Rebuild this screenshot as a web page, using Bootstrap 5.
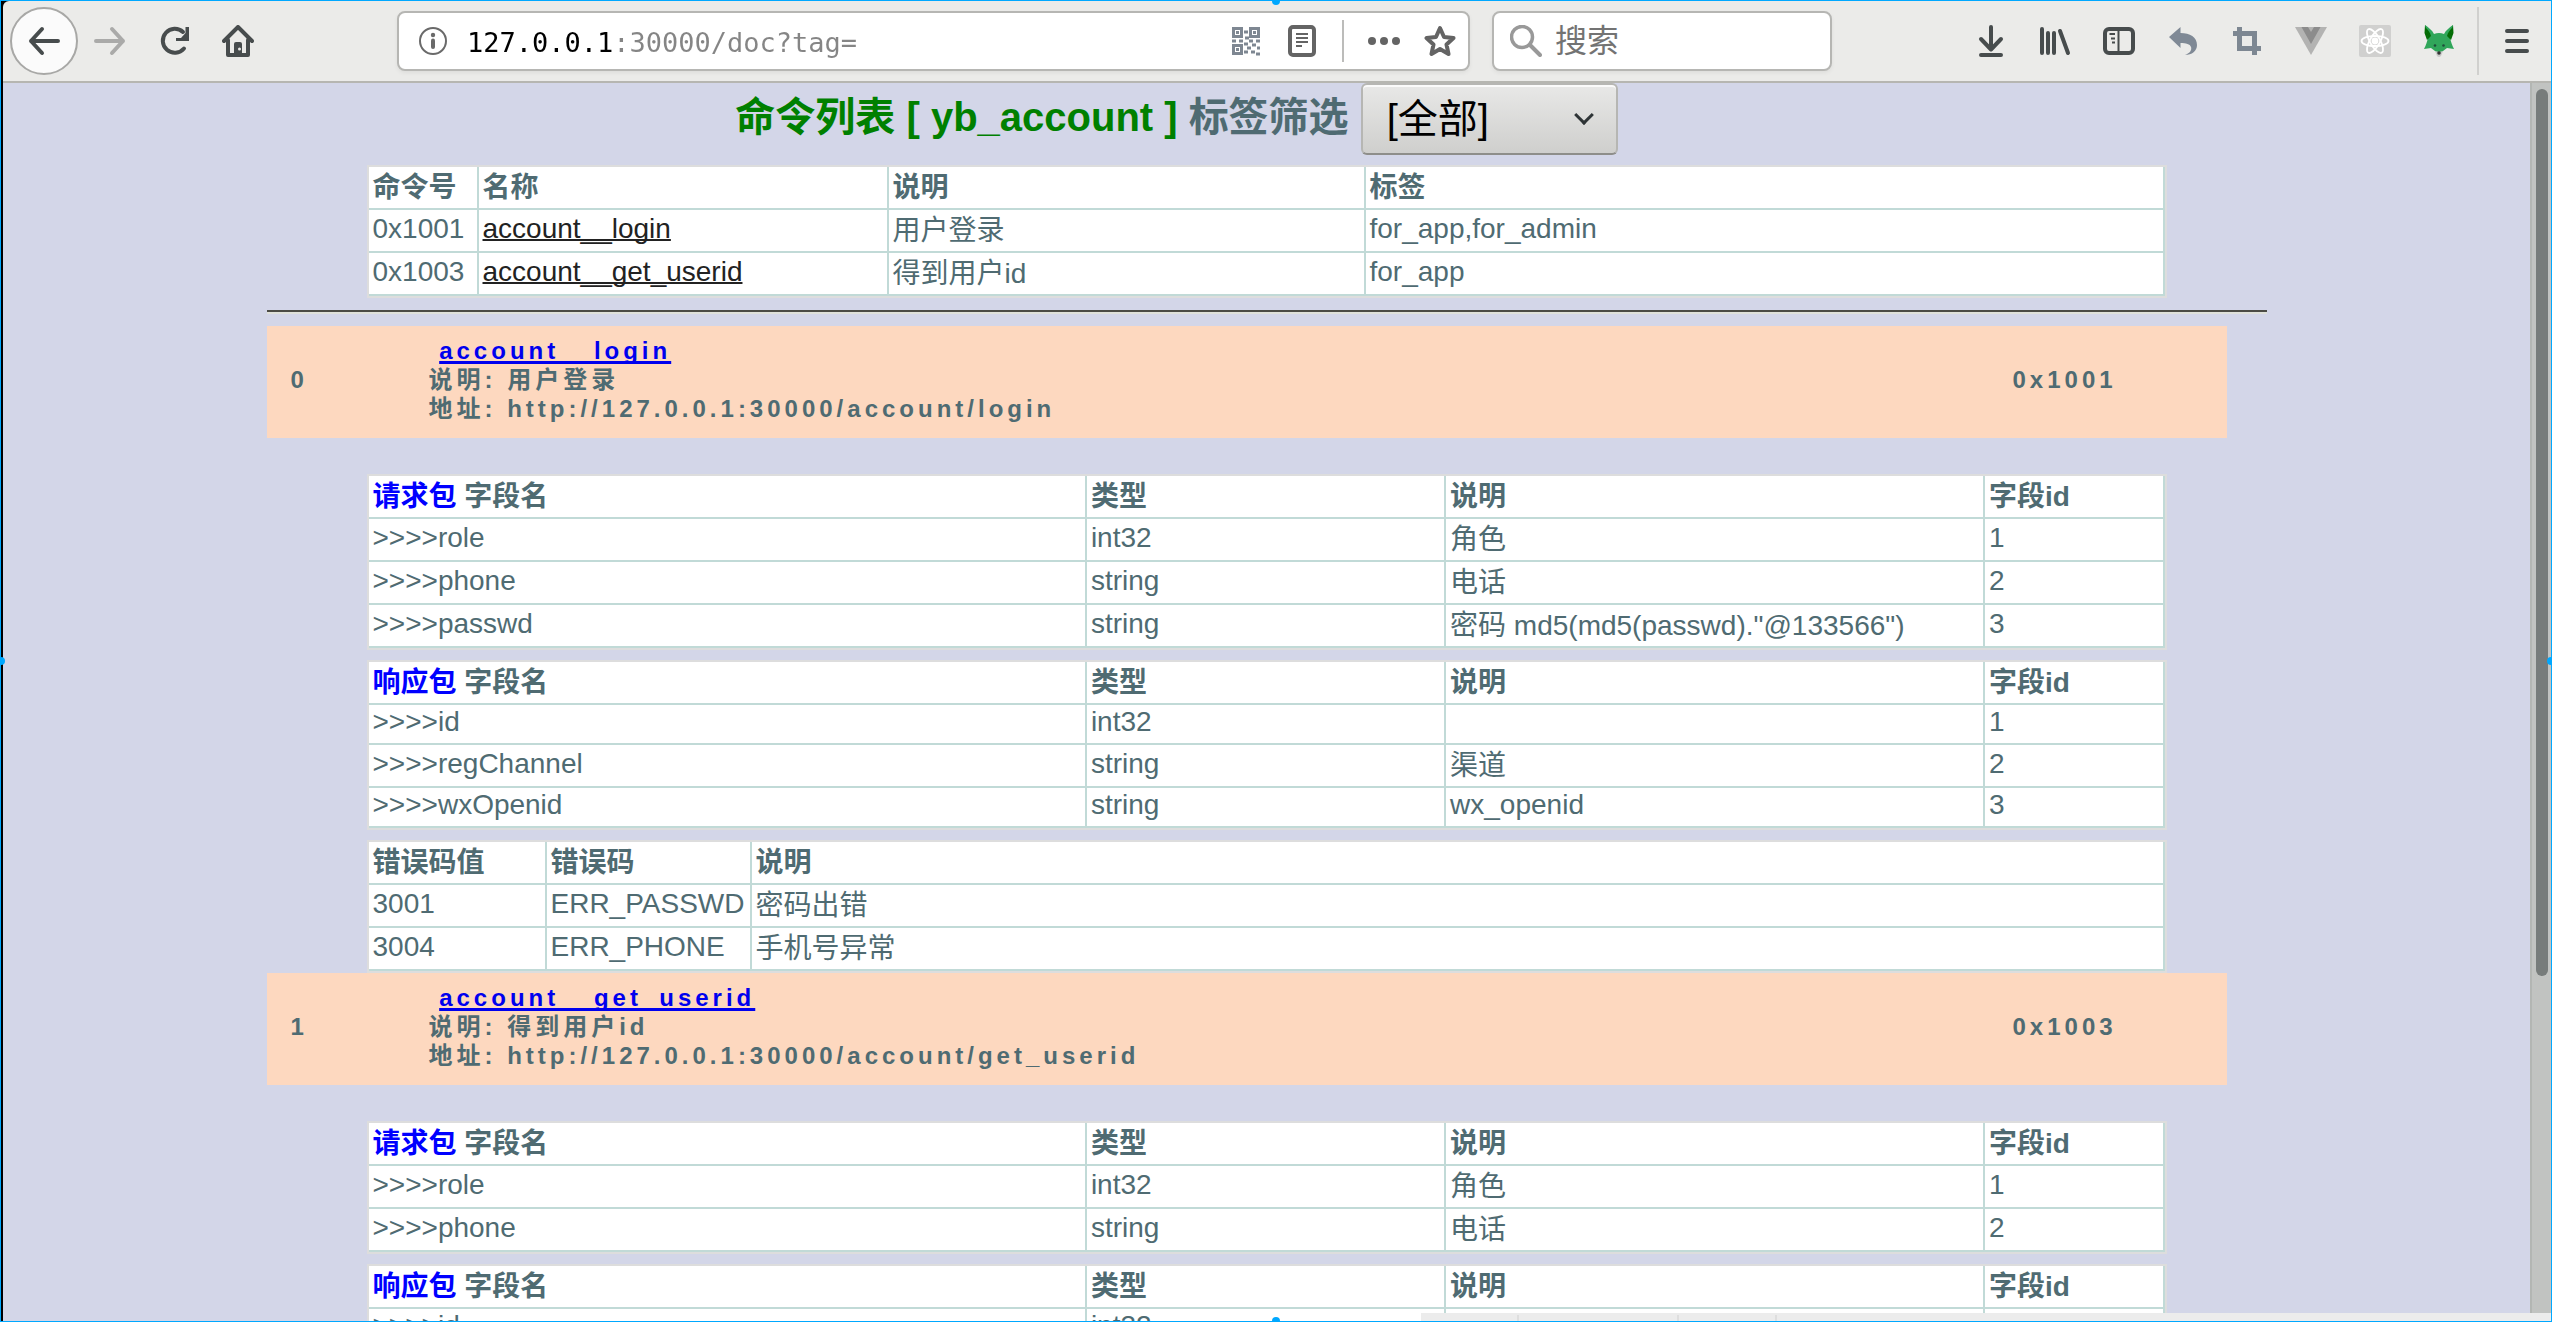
<!DOCTYPE html>
<html lang="zh-CN">
<head>
<meta charset="utf-8">
<meta name="viewport" content="width=device-width, initial-scale=1">
<title>命令列表</title>
<link href="https://cdn.jsdelivr.net/npm/bootstrap@5.3.0/dist/css/bootstrap.min.css" rel="stylesheet">
<style>
  body { font-family: "Liberation Sans", "Noto Sans CJK SC", sans-serif; font-size: 28px; line-height: 32px; color: #4f6b72; }
  .frame { height: 100vh; border: 1px solid #00a8ff; background: #000; padding-left: 2px; }
  .grip { position: absolute; width: 8px; height: 8px; border-radius: 50%; background: #00a8ff; z-index: 5; }
  .grip-t { top: -4px; left: calc(50% - 4px); } .grip-b { bottom: -4px; left: calc(50% - 4px); }
  .grip-l { left: -4px; top: calc(50% - 4px); } .grip-r { right: -4px; top: calc(50% - 4px); }

  .toolbar { height: 82px; padding: 0 2px 0 7px; background: #ebebe9; border-bottom: 2px solid #b6b6b1; border-top-left-radius: 6px; }
  .tool { width: 64px; height: 68px; padding: 0; border: 0; background: none; display: flex; align-items: center; justify-content: center; flex: none; }
  .tool-back { width: 68px; border: 2px solid #a8a8a6; border-radius: 50%; background: #fbfbfb; }
  .tool svg, .slim svg { width: 32px; height: 32px; display: block; }
  .slim { width: 56px; height: 56px; padding: 0; border: 0; background: none; display: flex; align-items: center; justify-content: center; flex: none; }
  .spacer { width: 5%; flex: none; }
  .field { height: 60px; border: 2px solid #b6b6b3; border-radius: 8px; background: #fff; box-shadow: 0 2px 4px rgba(0,0,0,.06); }
  .field input { border: 0; outline: 0; padding: 0; min-width: 0; }
  .field .url-text { padding-top: 3px; font: 27px/40px "DejaVu Sans Mono", monospace; background: linear-gradient(to right, #000 9ch, #858585 9ch); -webkit-background-clip: text; background-clip: text; color: transparent; }
  .info-mark { width: 28px; height: 28px; margin: 0 20px; flex: none; }
  .rule-v { width: 2px; height: 42px; background: #bcbcba; margin: 0 12px; flex: none; }
  .search-field { width: 340px; margin-left: 22px; padding-left: 16px; }
  .search-field svg { width: 32px; height: 32px; flex: none; }
  .search-field input { font-size: 32px; line-height: 40px; margin-left: 13px; background: none; color: #737373; }
  .search-field input::placeholder { color: #737373; opacity: 1; }
  .rule-menu { width: 2px; height: 68px; background: #d0d0ce; margin: 0 6px; }

  .doc-view { background: #d3d6e8; overflow: hidden; min-width: 0; }
  .doc-main { max-width: 2000px; }
  .title-bar { height: 82px; padding-right: 180px; font-size: 40px; line-height: 48px; font-weight: 700; }
  .title-bar h1, .title-bar label { font-size: 40px; line-height: 48px; font-weight: 700; margin: 10px 0 0; }
  .title-bar h1 { color: green; }
  .title-bar label { margin-left: 11px; }
  .tag-select { width: 257px; height: 72px; margin-left: 12px; padding: 0 24px; font: 40px/48px "Liberation Sans", "Noto Sans CJK SC", sans-serif; color: #000;
    appearance: none; border: 2px solid #b6b6b3; border-bottom-color: #8e8e8a; border-radius: 6px; box-shadow: inset 0 2px 0 #fafafa; background: linear-gradient(#e8e8e7, #cfcfcd); }
  .select-wrap::after { content: ""; position: absolute; right: 27px; top: 25px; width: 14px; height: 14px; border: solid #2e3436; border-width: 0 3px 3px 0; transform: rotate(45deg); pointer-events: none; }

  .grid-table { width: 90%; margin: 0 auto 10px; border: 2px solid #ddd; border-collapse: separate; border-spacing: 0; background: #fff; table-layout: fixed; }
  .grid-table th, .grid-table td { padding: 0 4px 4px; height: 43px; border-right: 2px solid #c1dad7; border-bottom: 2px solid #c1dad7; text-align: left; vertical-align: middle; white-space: nowrap; }
  .grid-table th, .grid-table .zh { padding: 2px 4px; }
  .grid-table .low td { height: 40px; }
  .grid-table a { color: #222; text-decoration-thickness: 2px; text-decoration-skip-ink: none; }
  .grid-table em { font-style: normal; color: #00f; }
  .w-code { width: 110px; } .w-name { width: 410px; } .w-note { width: 477px; }
  .w-errno { width: 178px; } .w-err { width: 205px; }
  .split { height: 4px; margin: 12px 0; background: #dfe1da; border-top: 2px solid #4b4b45; }

  .cmd { width: 98%; height: 112px; padding: 0 0 6px 24px; background: #fdd8bf; font-size: 24px; line-height: 29px; font-weight: 700; letter-spacing: 4px; margin-bottom: 36px; }
  .cmd a { color: #00e; text-decoration-thickness: 3px; text-decoration-skip-ink: none; }
  .cmd-no { width: 138px; } .cmd-code { width: 214px; }
  .after-err { margin-top: -10px; }

  .scroll-track { width: 21px; padding: 6px 3px 0 4px; background: #c1c3c1; border-left: 2px solid #b3b6b3; flex: none; }
  .scroll-thumb { width: 12px; height: 72%; border-radius: 6px; background: #777c7b; }
  .task-strip { position: absolute; right: 0; bottom: 0; width: 1130px; height: 8px; background: #ececec; }
  .task-strip i { border-right: 2px solid #dedede; height: 6px; align-self: flex-end; }
</style>
</head>
<body>
<div class="frame d-flex flex-column position-relative overflow-hidden">
  <span class="grip grip-t"></span><span class="grip grip-b"></span><span class="grip grip-l"></span><span class="grip grip-r"></span>

  <header class="toolbar d-flex align-items-center flex-shrink-0">
    <button class="tool tool-back" aria-label="后退"><svg viewBox="0 0 32 32" fill="none" stroke="#474c4d" stroke-width="4" stroke-linecap="round" stroke-linejoin="round"><path d="M30 16H3M14 4 3 16l11 12"/></svg></button>
    <button class="tool" aria-label="前进"><svg viewBox="0 0 32 32" fill="none" stroke="#aaaaa9" stroke-width="4" stroke-linecap="round" stroke-linejoin="round"><path d="M2 16h27M18 4l11 12-11 12"/></svg></button>
    <button class="tool" aria-label="刷新"><svg viewBox="0 0 32 32" fill="none" stroke="#474c4d" stroke-width="4"><path d="M26 23.500A12 12 0 1 1 25 7" stroke-linecap="round"/><path d="M31 2v14H18v-3h5L27.500 8V2z" fill="#474c4d" stroke="none"/></svg></button>
    <button class="tool" aria-label="主页"><svg viewBox="0 0 32 32" fill="none" stroke="#474c4d" stroke-width="4" stroke-linecap="round" stroke-linejoin="round"><path d="M2 16 16 2l14 14M6 15v15h20V15"/><path d="M12 30V19q0-2 2-2h4q2 0 2 2v11z" fill="#474c4d" stroke="none"/><circle cx="17.500" cy="24" r="1.500" fill="#ebebe9" stroke="none"/></svg></button>
    <div class="spacer"></div>
    <div class="field d-flex align-items-center flex-grow-1">
      <svg class="info-mark" viewBox="0 0 28 28" fill="none"><circle cx="14" cy="14" r="13" stroke="#6a6a6a" stroke-width="2"/><circle cx="14" cy="8" r="2.200" fill="#6a6a6a"/><path d="M14 13.500V20" stroke="#6a6a6a" stroke-width="4" stroke-linecap="round"/></svg>
      <input class="url-text flex-grow-1" type="text" aria-label="地址" value="127.0.0.1:30000/doc?tag=">
      <button class="slim" aria-label="二维码"><svg viewBox="0 0 32 32" fill="none" stroke="#7e8792" stroke-width="3"><path d="M3.500 3.500h8v8h-8zM20.500 3.500h8v8h-8zM3.500 20.500h8v8h-8z"/><path d="M6 7.500h3M23 7.500h3M6 24.500h3M14 7h4M15 13h4M2 16h4M9 16h4M14 19h4M19 16h4M26 16h4M17 23h4M22 20h4M27 23h3M14 27h4M21 27h4M26 29h4"/></svg></button>
      <button class="slim" aria-label="阅读模式"><svg viewBox="0 0 32 32" fill="none" stroke="#646464"><rect x="4" y="2" width="24" height="28" rx="3" stroke-width="4"/><path d="M10 9h12M10 13h12M10 17h12M10 21h6" stroke-width="2"/></svg></button>
      <span class="rule-v"></span>
      <button class="slim" aria-label="更多"><svg viewBox="0 0 32 32" fill="#646464"><circle cx="4" cy="16" r="4"/><circle cx="16" cy="16" r="4"/><circle cx="28" cy="16" r="4"/></svg></button>
      <button class="slim" aria-label="收藏"><svg viewBox="0 0 32 32" fill="none" stroke="#646464" stroke-width="4" stroke-linejoin="round"><path d="m16 3 4 9 9.500 1-7 6.500 2 9.500-8.500-5-8.500 5 2-9.500-7-6.500 9.500-1z"/></svg></button>
    </div>
    <div class="field search-field d-flex align-items-center flex-shrink-0">
      <svg viewBox="0 0 32 32" fill="none" stroke="#999" stroke-linecap="round"><circle cx="12" cy="12" r="10.500" stroke-width="3.500"/><path d="m20 20 10 10" stroke-width="4"/></svg>
      <input class="flex-grow-1" type="search" placeholder="搜索" aria-label="搜索">
    </div>
    <div class="spacer"></div>
    <button class="tool" aria-label="下载"><svg viewBox="0 0 32 32" fill="none" stroke="#474c4d" stroke-width="4" stroke-linecap="round" stroke-linejoin="round"><path d="M16 2v22M6 14l10 10.500L26 14M6 30h20"/></svg></button>
    <button class="tool" aria-label="书库"><svg viewBox="0 0 32 32" fill="none" stroke="#474c4d" stroke-width="4" stroke-linecap="round"><path d="M3 4v24M9 8v20M15 8v20M21 6l8 22"/></svg></button>
    <button class="tool" aria-label="侧栏"><svg viewBox="0 0 32 32" fill="none" stroke="#474c4d"><rect x="2" y="4" width="28" height="24" rx="4" stroke-width="4"/><path d="M15.500 4v24M6.500 9H12M8 13.500h4M9 17.500h3" stroke-width="2"/></svg></button>
    <button class="tool" aria-label="撤销"><svg viewBox="0 0 32 32"><path d="M2 12 13.500 2v6C23 8 30 12 30 20c0 6-5 10-12 10 5-2 7-5 6-8-1-3-5-4-10.500-4v5z" fill="#7f8995"/></svg></button>
    <button class="tool" aria-label="裁剪"><svg viewBox="0 0 32 32" fill="none" stroke="#7d8792" stroke-width="5"><path d="M2 8.500h21.500V30M8.500 2v21.500H30"/></svg></button>
    <button class="tool" aria-label="Vue"><svg viewBox="0 0 32 32"><path d="M0 2h32L16 30z" fill="#b3b3b2"/><path d="M6.500 2H13l3 5 3-5h6.500L16 19z" fill="#8c8c8c"/></svg></button>
    <button class="tool" aria-label="React"><svg viewBox="0 0 32 32" fill="none" stroke="#fff" stroke-width="1.800"><rect width="32" height="32" rx="2" fill="#d0d0cf" stroke="none"/><ellipse cx="16" cy="16" rx="13.500" ry="5"/><ellipse cx="16" cy="16" rx="13.500" ry="5" transform="rotate(60 16 16)"/><ellipse cx="16" cy="16" rx="13.500" ry="5" transform="rotate(120 16 16)"/><circle cx="16" cy="16" r="2.500" fill="#fff"/></svg></button>
    <button class="tool" aria-label="狐狸"><svg viewBox="0 0 32 32"><path d="M2 0 1.500 8 4 15l6-5zM30 0l.5 8-2.500 7-6-5z" fill="#046c04"/><path d="M2 0c4 3 7 5 9 9q5-2 10 0c2-4 5-6 9-9l-3 13c1 4 2 7 4 11l-7-1-8 6-8-6-7 1c2-4 3-7 4-11z" fill="#30a65a"/><path d="M2 2c3 3 5 5 6 9l-3 3zM30 2c-3 3-5 5-6 9l3 3z" fill="#046c04"/><circle cx="12" cy="20.500" r="1.300" fill="#1e4d3a"/><circle cx="20.500" cy="20.500" r="1.300" fill="#1e4d3a"/><path d="m12 26 4 1 4-1-2 5q-2 2-4 0z" fill="#c9c9c9"/><circle cx="16" cy="28" r="1.800" fill="#333"/></svg></button>
    <span class="rule-menu"></span>
    <button class="tool" aria-label="菜单"><svg viewBox="0 0 32 32" stroke="#474c4d" stroke-width="4" stroke-linecap="round"><path d="M6 6h20M6 16h20M6 26h20"/></svg></button>
  </header>

  <div class="d-flex flex-grow-1 overflow-hidden">
    <main class="doc-view flex-grow-1">
      <div class="doc-main mx-auto">
        <div class="title-bar d-flex align-items-start justify-content-center">
          <h1>命令列表 [ yb_account ]</h1>
          <label for="tag">标签筛选</label>
          <div class="select-wrap position-relative">
            <select class="tag-select" id="tag"><option>[全部]</option><option>for_app</option><option>for_admin</option></select>
          </div>
        </div>

        <table class="grid-table">
          <colgroup><col class="w-code"><col class="w-name"><col class="w-note"><col></colgroup>
          <tr><th>命令号</th><th>名称</th><th>说明</th><th>标签</th></tr>
          <tr><td>0x1001</td><td><a href="#login">account__login</a></td><td class="zh">用户登录</td><td>for_app,for_admin</td></tr>
          <tr><td>0x1003</td><td><a href="#get_userid">account__get_userid</a></td><td class="zh">得到用户id</td><td>for_app</td></tr>
        </table>
        <div class="split"></div>

        <section class="cmd d-flex align-items-center" id="login">
          <div class="cmd-no">0</div>
          <div class="flex-grow-1">&nbsp;<a href="#login">account__login</a><br>说明: 用户登录<br>地址: http://127.0.0.1:30000/account/login</div>
          <div class="cmd-code">0x1001</div>
        </section>
        <table class="grid-table">
          <colgroup><col style="width:40%"><col style="width:20%"><col style="width:30%"><col style="width:10%"></colgroup>
          <tr><th><em>请求包</em> 字段名</th><th>类型</th><th>说明</th><th>字段id</th></tr>
          <tr><td>&gt;&gt;&gt;&gt;role</td><td>int32</td><td class="zh">角色</td><td>1</td></tr>
          <tr><td>&gt;&gt;&gt;&gt;phone</td><td>string</td><td class="zh">电话</td><td>2</td></tr>
          <tr><td>&gt;&gt;&gt;&gt;passwd</td><td>string</td><td class="zh">密码 md5(md5(passwd)."@133566")</td><td>3</td></tr>
        </table>
        <table class="grid-table">
          <colgroup><col style="width:40%"><col style="width:20%"><col style="width:30%"><col style="width:10%"></colgroup>
          <tr><th><em>响应包</em> 字段名</th><th>类型</th><th>说明</th><th>字段id</th></tr>
          <tr class="low"><td>&gt;&gt;&gt;&gt;id</td><td>int32</td><td></td><td>1</td></tr>
          <tr><td>&gt;&gt;&gt;&gt;regChannel</td><td>string</td><td class="zh">渠道</td><td>2</td></tr>
          <tr class="low"><td>&gt;&gt;&gt;&gt;wxOpenid</td><td>string</td><td>wx_openid</td><td>3</td></tr>
        </table>
        <table class="grid-table">
          <colgroup><col class="w-errno"><col class="w-err"><col></colgroup>
          <tr><th>错误码值</th><th>错误码</th><th>说明</th></tr>
          <tr><td>3001</td><td>ERR_PASSWD</td><td class="zh">密码出错</td></tr>
          <tr><td>3004</td><td>ERR_PHONE</td><td class="zh">手机号异常</td></tr>
        </table>

        <section class="cmd after-err d-flex align-items-center" id="get_userid">
          <div class="cmd-no">1</div>
          <div class="flex-grow-1">&nbsp;<a href="#get_userid">account__get_userid</a><br>说明: 得到用户id<br>地址: http://127.0.0.1:30000/account/get_userid</div>
          <div class="cmd-code">0x1003</div>
        </section>
        <table class="grid-table">
          <colgroup><col style="width:40%"><col style="width:20%"><col style="width:30%"><col style="width:10%"></colgroup>
          <tr><th><em>请求包</em> 字段名</th><th>类型</th><th>说明</th><th>字段id</th></tr>
          <tr><td>&gt;&gt;&gt;&gt;role</td><td>int32</td><td class="zh">角色</td><td>1</td></tr>
          <tr><td>&gt;&gt;&gt;&gt;phone</td><td>string</td><td class="zh">电话</td><td>2</td></tr>
        </table>
        <table class="grid-table">
          <colgroup><col style="width:40%"><col style="width:20%"><col style="width:30%"><col style="width:10%"></colgroup>
          <tr><th><em>响应包</em> 字段名</th><th>类型</th><th>说明</th><th>字段id</th></tr>
          <tr class="low"><td>&gt;&gt;&gt;&gt;id</td><td>int32</td><td></td><td>1</td></tr>
        </table>
      </div>
    </main>
    <div class="scroll-track"><div class="scroll-thumb"></div></div>
  </div>
  <div class="task-strip d-flex"><i style="width:98px"></i><i style="width:160px"></i><i style="width:98px"></i></div>
</div>
<script src="https://cdn.jsdelivr.net/npm/bootstrap@5.3.0/dist/js/bootstrap.bundle.min.js"></script>
</body>
</html>
